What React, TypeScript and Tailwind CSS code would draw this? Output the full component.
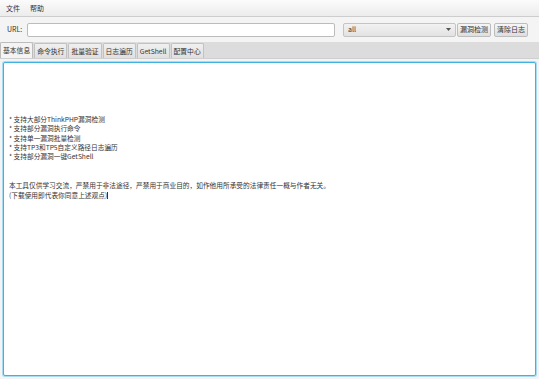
const tabs = ['基本信息', '命令执行', '批量验证', '日志遍历', 'GetShell', '配置中心']

const features = [
  '* 支持大部分ThinkPHP漏洞检测',
  '* 支持部分漏洞执行命令',
  '* 支持单一漏洞批量检测',
  '* 支持TP3和TP5自定义路径日志遍历',
  '* 支持部分漏洞一键GetShell',
]

const font = { fontFamily: '"Noto Sans CJK SC", "Noto Sans", sans-serif' }

function Btn({ label }: { label: string }) {
  return (
    <button className="h-[14px] px-[2px] flex items-center text-[7px] leading-none text-[#333] rounded-[2px] border border-[#bdbdbd] bg-gradient-to-b from-[#f6f6f6] to-[#dedede]">
      {label}
    </button>
  )
}

export default function App() {
  return (
    <div className="w-[539px] h-[379px] bg-[#f4f4f4] flex flex-col overflow-hidden text-[#333]" style={font}>
      <div className="h-[17px] flex items-center gap-[10px] px-[6px] text-[7px] bg-gradient-to-b from-[#fbfbfb] to-[#ececec] border-b border-[#cdcdcd]">
        <span>文件</span>
        <span>帮助</span>
      </div>

      <div className="h-[25px] flex items-center px-[7px]">
        <span className="text-[7px] w-[20px]">URL:</span>
        <div className="w-[308px] h-[14px] bg-white border border-[#bcbcbc] rounded-[2px]" />
        <div className="ml-[8px] w-[113px] h-[14px] flex items-center justify-between px-[4px] text-[7px] rounded-[2px] border border-[#c4c4c4] bg-gradient-to-b from-[#f2f2f2] to-[#e2e2e2]">
          <span>all</span>
          <svg width="5" height="3" viewBox="0 0 5 3"><path d="M0 0h5L2.5 3z" fill="#555" /></svg>
        </div>
        <div className="ml-[1px] flex gap-[3px]">
          <Btn label="漏洞检测" />
          <Btn label="清除日志" />
        </div>
      </div>

      <div className="h-[17px] bg-[#dcdcdc] flex items-end gap-[1px] border-b border-[#cfcfcf]">
        {tabs.map((t, i) => (
          <div
            key={t}
            className={
              i === 0
                ? 'h-[16px] px-[2px] flex items-center text-[6.8px] bg-[#f4f4f4] border border-b-0 border-[#bcbcbc] rounded-t-[2px]'
                : 'h-[15px] px-[2px] flex items-center text-[6.8px] bg-gradient-to-b from-[#f0f0f0] to-[#e0e0e0] border border-b-0 border-[#c2c2c2] rounded-t-[2px]'
            }
          >
            {t}
          </div>
        ))}
      </div>

      <div className="flex-1 px-[3px] pt-[3px] pb-[3px]">
        <div className="h-full bg-white border border-[#3fb2e4] rounded-[2px] shadow-[0_0_0_1px_#a9dcf2] px-[5px] pt-[52px] text-[6.7px] leading-[9.3px] text-[#333]">
          {features.map(f => (
            <div key={f}>{f}</div>
          ))}
          <div className="h-[20px]" />
          <div>本工具仅供学习交流，严禁用于非法途径，严禁用于商业目的，如作他用所承受的法律责任一概与作者无关。</div>
          <div>(下载使用即代表你同意上述观点)<span className="inline-block w-px h-[7px] bg-[#333] align-middle" /></div>
        </div>
      </div>
    </div>
  )
}
